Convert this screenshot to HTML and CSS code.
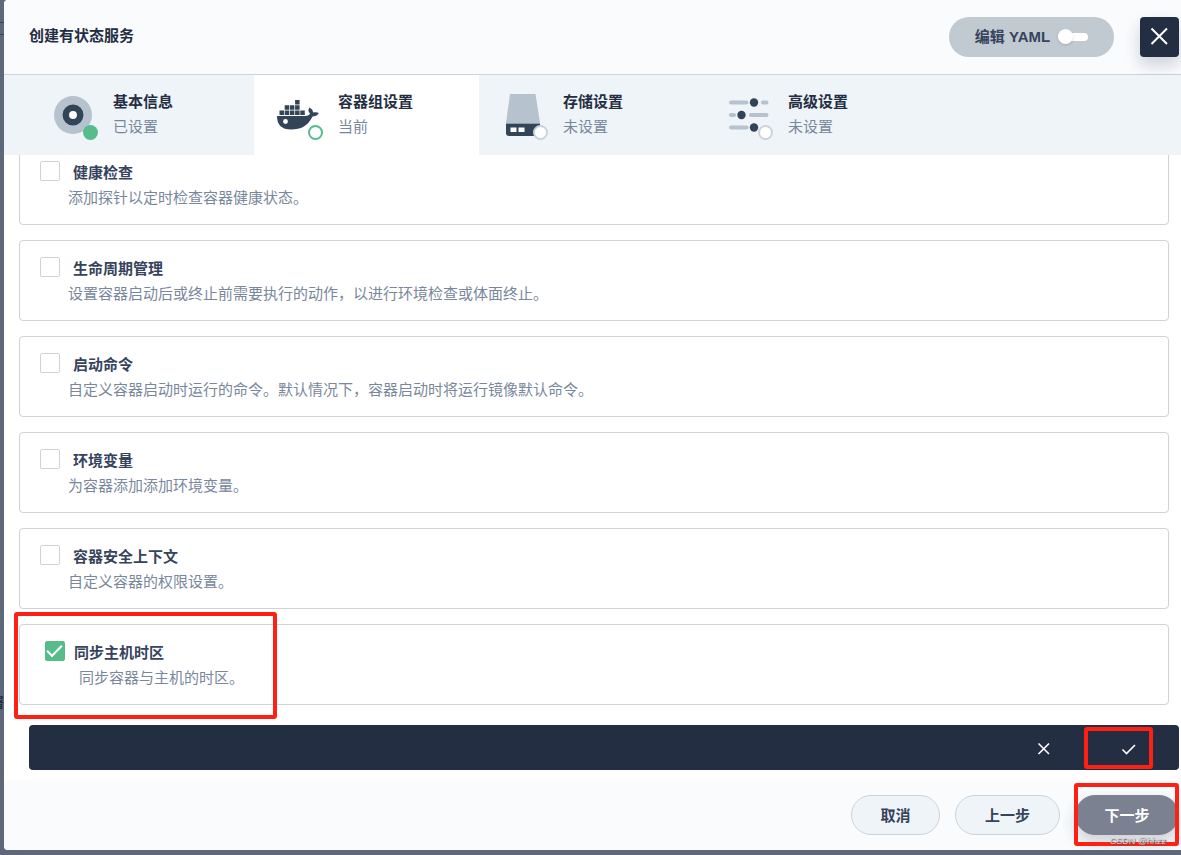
FILE: index.html
```html
<!DOCTYPE html>
<html lang="zh-CN">
<head>
<meta charset="utf-8">
<title>创建有状态服务</title>
<meta name="viewport" content="width=device-width, initial-scale=1">
<link rel="stylesheet" href="styles.css">
</head>
<body>
<div class="backdrop" aria-hidden="true"><span class="backdrop-line"></span><span class="backdrop-text">署</span></div>
<main class="modal">
  <header class="header">
    <h1 class="header-title">创建有状态服务</h1>
    <button class="yaml" type="button">编辑 YAML<span class="switch"></span></button>
    <button class="close" type="button" aria-label="关闭">
      <svg width="20" height="20" viewBox="0 0 20 20"><path d="M1.500 1.500L17 17M17 1.500L1.500 17" stroke="#fff" stroke-width="2" fill="none"/></svg>
    </button>
  </header>
  <nav class="tabs">
    <button class="tab tab-first" type="button">
      <svg width="48" height="48" viewBox="0 0 48 48"><circle cx="23" cy="23" r="19" fill="#b6c2cd"/><circle cx="23" cy="23" r="7.2" fill="#fff" stroke="#324558" stroke-width="6.5"/><circle cx="40.5" cy="40.500" r="7.500" fill="#55bc8a"/></svg>
      <span class="tab-text"><strong>基本信息</strong><span>已设置</span></span>
    </button>
    <button class="tab tab-active" type="button" aria-current="step">
      <svg width="48" height="48" viewBox="0 0 48 48"><g fill="#324558"><path d="M2 24H30C33 24 34.500 23 35 21.500C33 19.500 33 17.500 34.500 15.500C37 17 38 18.500 38 20.500C40 20 42 20 44 21C42.500 23.500 40 24.500 37.500 24.500C33 34 26 37.500 16 37.500Q2 37.500 2 24Z"/><path d="M4.500 18.500h4.500v4.500h-4.500zM9.700 18.500h4.500v4.500h-4.500zM14.900 18.500h4.500v4.500h-4.500zM20.100 18.500h4.500v4.500h-4.500zM25.300 18.500h4.500v4.500h-4.500zM9.700 13.300h4.500v4.500h-4.500zM14.900 13.300h4.500v4.500h-4.500zM20.100 13.300h4.500v4.500h-4.500zM20.100 8.100h4.500v4.500h-4.500z"/></g><circle cx="10.500" cy="29.500" r="2.400" fill="#fff"/><circle cx="40.500" cy="40.500" r="6.500" fill="#fff" stroke="#55bc8a" stroke-width="2"/></svg>
      <span class="tab-text"><strong>容器组设置</strong><span>当前</span></span>
    </button>
    <button class="tab" type="button">
      <svg width="48" height="48" viewBox="0 0 48 48"><path d="M10 2H35.500L40 31H6Z" fill="#b6c2cd"/><path d="M6 31.500H40V41Q40 44 37 44H9Q6 44 6 41Z" fill="#324558"/><path d="M10.500 35.500h6v4.500h-6zM18.500 35.500h6v4.500h-6z" fill="#fff"/><circle cx="40.500" cy="40.500" r="6.500" fill="#fff" stroke="#ccd3db" stroke-width="2"/></svg>
      <span class="tab-text"><strong>存储设置</strong><span>未设置</span></span>
    </button>
    <button class="tab" type="button">
      <svg width="48" height="48" viewBox="0 0 48 48"><path d="M6 10.500H21.500M38 10.500H41.500M6 23H9M26 23H41.500M6 35.500H21.500" stroke="#b6c2cd" stroke-width="4" stroke-linecap="round"/><g fill="#324558"><circle cx="29" cy="10.500" r="4.200"/><circle cx="16.500" cy="23" r="4.200"/><circle cx="29" cy="35.500" r="4.200"/></g><circle cx="40.500" cy="40.500" r="6.500" fill="#fff" stroke="#ccd3db" stroke-width="2"/></svg>
      <span class="tab-text"><strong>高级设置</strong><span>未设置</span></span>
    </button>
  </nav>
  <section class="content">
    <div class="card">
      <label class="option"><input class="check" type="checkbox">健康检查</label>
      <p class="desc">添加探针以定时检查容器健康状态。</p>
    </div>
    <div class="card">
      <label class="option"><input class="check" type="checkbox">生命周期管理</label>
      <p class="desc">设置容器启动后或终止前需要执行的动作，以进行环境检查或体面终止。</p>
    </div>
    <div class="card">
      <label class="option"><input class="check" type="checkbox">启动命令</label>
      <p class="desc">自定义容器启动时运行的命令。默认情况下，容器启动时将运行镜像默认命令。</p>
    </div>
    <div class="card">
      <label class="option"><input class="check" type="checkbox">环境变量</label>
      <p class="desc">为容器添加添加环境变量。</p>
    </div>
    <div class="card">
      <label class="option"><input class="check" type="checkbox">容器安全上下文</label>
      <p class="desc">自定义容器的权限设置。</p>
    </div>
    <div class="card card-selected">
      <label class="option"><input class="check" type="checkbox" checked>同步主机时区</label>
      <p class="desc">同步容器与主机的时区。</p>
      <span class="mark mark-card"></span>
    </div>
    <div class="confirm">
      <button class="confirm-button" type="button" aria-label="取消编辑"><svg width="20" height="20" viewBox="0 0 20 20"><path d="M4.500 5.500L15 16M15 5.500L4.500 16" stroke="#fff" stroke-width="1.600" fill="none"/></svg></button>
      <button class="confirm-button" type="button" aria-label="确认"><svg width="20" height="20" viewBox="0 0 20 20"><path d="M3.500 11.500L7.500 15.500L16 7" stroke="#fff" stroke-width="1.600" fill="none"/></svg><span class="mark mark-confirm"></span></button>
    </div>
  </section>
  <footer class="footer">
    <button class="button" type="button">取消</button>
    <button class="button button-wide" type="button">上一步</button>
    <div class="next">
      <button class="button button-primary" type="button">下一步</button>
      <span class="mark mark-next"></span>
      <span class="watermark">CSDN @hhzz</span>
    </div>
  </footer>
</main>
</body>
</html>
```
FILE: styles.css
```css
* { box-sizing: border-box; }
body {
  margin: 0;
  height: 100vh;
  overflow: hidden;
  padding: 0 0 5px 4px;
  background: #5e687b;
  color: #242e42;
  font: 15px/25px "Liberation Sans", "Noto Sans CJK SC", sans-serif;
}
button { font: inherit; color: inherit; border: 0; padding: 0; cursor: pointer; }
svg { display: block; flex: none; }
.backdrop { position: absolute; left: 0; top: 0; width: 4px; height: 100%; overflow: hidden; color: #242e42; }
.backdrop-line { position: absolute; top: 22px; width: 4px; height: 13px; border: solid #36415a; border-width: 1px 0; }
.backdrop-text { position: absolute; right: 0; top: 690px; font-weight: bold; font-size: 13px; }
.modal { height: 100%; display: flex; flex-direction: column; background: #fff; border-radius: 4px 0 0 4px; overflow: hidden; }
.header { display: flex; align-items: center; padding: 17px 2px 17px 25px; background: #f9fbfd; border-bottom: 1px solid #ccd3db; }
.header-title { flex: 1; margin: 0; padding-bottom: 3px; font-size: 15px; line-height: 25px; font-weight: bold; }
.yaml { display: flex; align-items: center; justify-content: center; gap: 8px; width: 165px; height: 40px; margin-right: 26px; padding-bottom: 1px; border-radius: 20px; background: #c1c9d1; color: #36435c; font-weight: bold; }
.switch { display: flex; align-items: center; width: 30px; height: 8px; border-radius: 4px; background: #fff; }
.switch::before { content: ""; width: 15px; height: 15px; border-radius: 50%; background: #fff; box-shadow: 0 1px 3px #36435c33; }
.close { display: grid; place-items: center; width: 39px; height: 40px; border-radius: 4px; background: #242e42; box-shadow: 0 8px 16px #242e4233; }
.tabs { display: flex; flex: none; background: #eff4f9; }
.tab { display: flex; align-items: center; gap: 15px; width: 225px; height: 80px; padding-left: 21px; text-align: left; background: transparent; }
.tab svg { margin-top: 2px; }
.tab-first { width: 250px; padding-left: 46px; }
.tab-active { background: #fff; }
.tab-text { display: flex; flex-direction: column; padding-bottom: 2px; color: #79879c; }
.tab-text strong { color: #242e42; }
.content { flex: 1; min-height: 0; display: flex; flex-direction: column; justify-content: flex-end; gap: 15px; padding: 0 12px 10px 15px; overflow: hidden; }
.card { position: relative; flex: none; padding: 15px 20px 14px; border: 1px solid #ccd3db; border-radius: 4px; }
.option { display: flex; align-items: flex-start; gap: 13px; color: #36435c; font-weight: bold; }
.check { appearance: none; display: grid; place-items: center; width: 20px; height: 20px; margin: 1px 0 0; border: 1px solid #ccd3db; border-radius: 2px; background: #fff; }
.check:checked { border-color: #55bc8a; background: #55bc8a; }
.check:checked::before { content: ""; width: 13px; height: 6px; margin: 0 2px 4px 0; border: solid #fff; border-width: 0 0 2px 2px; transform: rotate(-45deg); }
.desc { margin: 0; padding-left: 28px; color: #79879c; }
.card-selected { padding-left: 25px; }
.card-selected .option { gap: 9px; }
.card-selected .desc { padding-left: 34px; }
.confirm { display: flex; flex: none; justify-content: flex-end; height: 45px; margin: 5px -10px 0 10px; padding-right: 8px; border-radius: 4px; background: #242e42; }
.confirm-button { position: relative; display: grid; place-items: center; width: 85px; background: transparent; }
.footer { display: flex; flex: none; justify-content: flex-end; gap: 15px; padding: 15px 2px 15px 15px; background: #f9fbfd; }
.button { width: 89px; height: 40px; border: 1px solid #ccd3db; border-radius: 20px; background: #eff4f9; color: #36435c; font-weight: bold; }
.button-wide { width: 105px; }
.button-primary { width: 104px; border-color: #7b8190; background: #7b8190; color: #fff; box-shadow: 0 8px 16px #242e4233; }
.next { position: relative; }
.mark { position: absolute; border: 4px solid #ff2014; border-radius: 3px; pointer-events: none; }
.mark-card { left: -6px; top: -13px; width: 263px; height: 107px; }
.mark-confirm { left: -2px; top: 2px; width: 69px; height: 42px; }
.mark-next { left: -1px; top: -12px; width: 105px; height: 63px; }
.watermark { position: absolute; right: 13px; bottom: -12px; color: #d5d5d8; font-size: 9px; line-height: 12px; white-space: nowrap; text-shadow: 1px 1px 1px #555; }
```
